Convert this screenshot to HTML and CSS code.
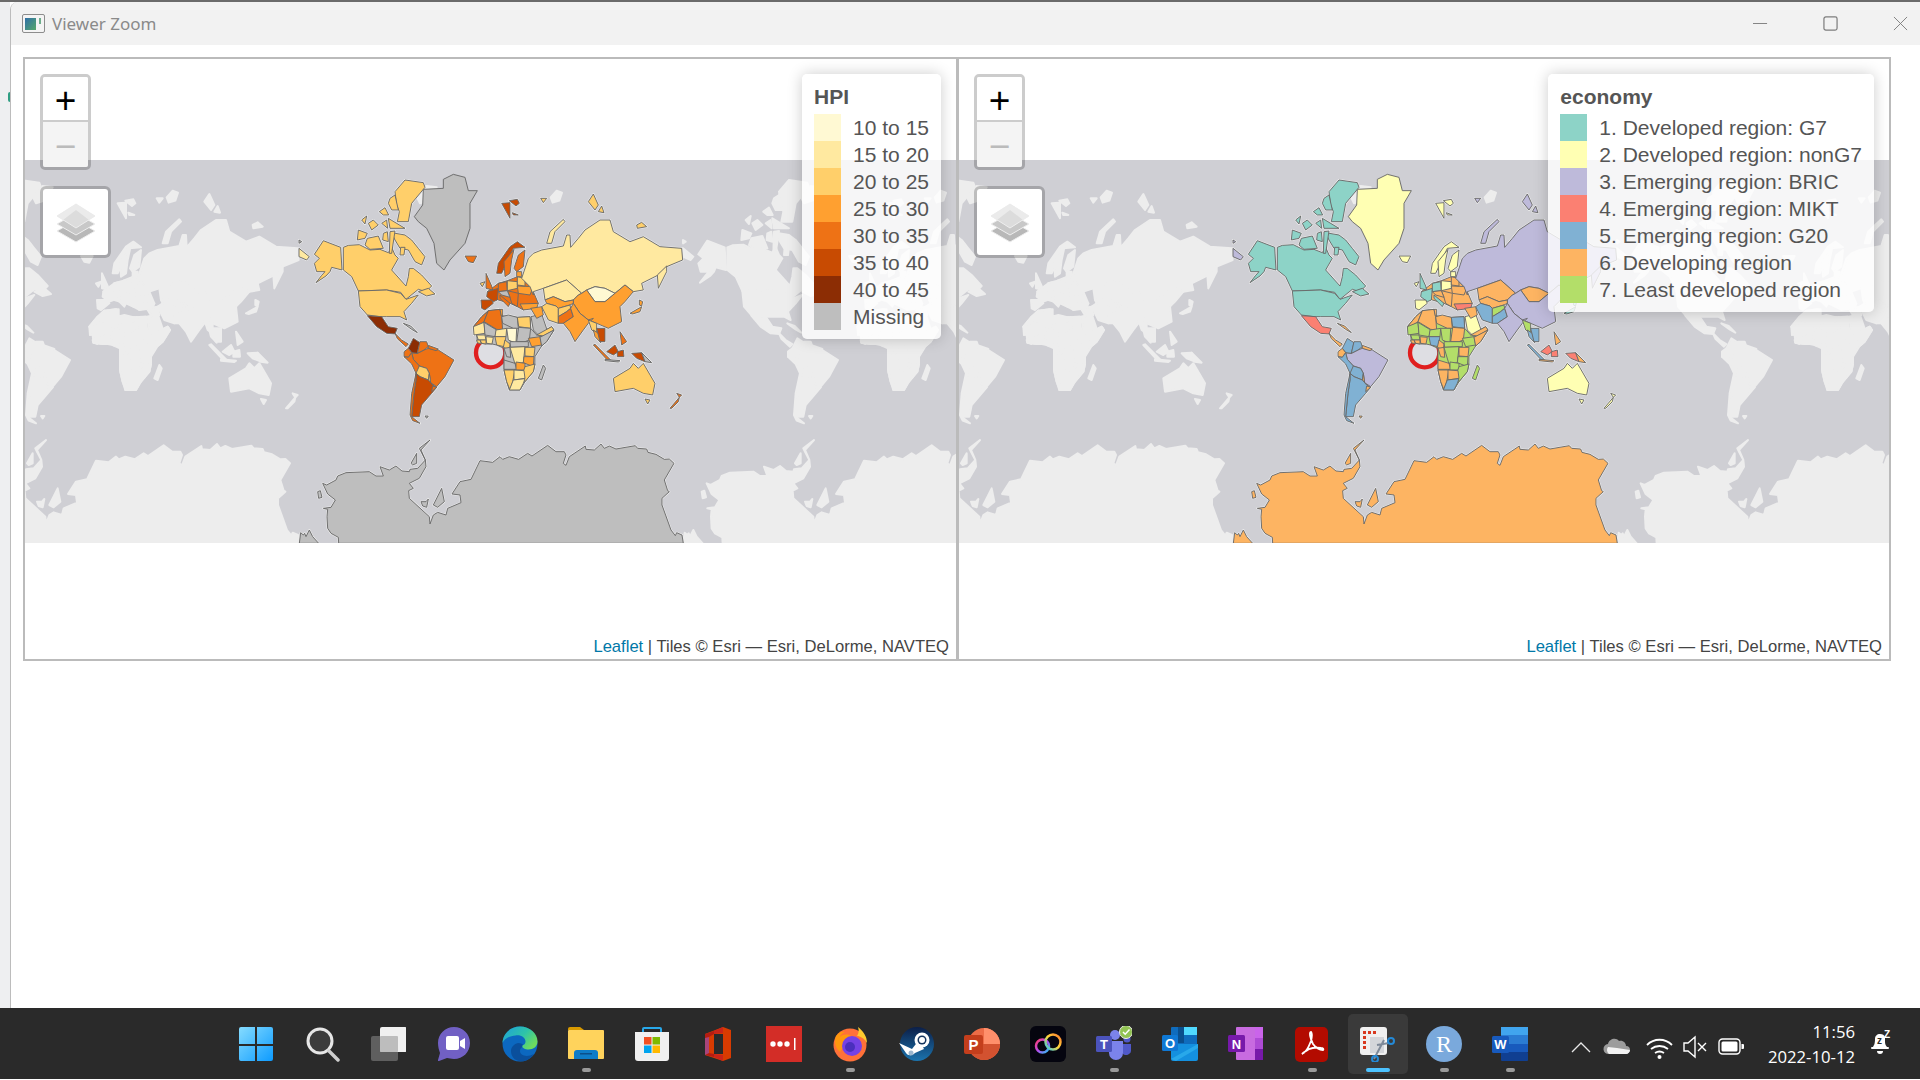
FILE: index.html
```html
<!doctype html>
<html lang="en">

<head>
    <meta charset="utf-8">
    <title>Viewer Zoom</title>

    <link rel="stylesheet" href="styles.css">
</head>

<body>
    <div class="topline"></div>

    <div class="desk">
        <div class="behind"><span class="behind-dot"></span></div>

        <div class="window">
            <div class="titlebar">
                <svg class="title-icon" viewBox="0 0 23 19">
                    <rect x="0.5" y="0.5" width="22" height="18" rx="1.5" fill="#f4f4f4" stroke="#8d8d8d"/>
                    <defs>
                        <linearGradient id="tileg" x1="0" y1="0" x2="1" y2="1">
                            <stop offset="0" stop-color="#2f6fa8"/>
                            <stop offset="1" stop-color="#56a86a"/>
                        </linearGradient>
                    </defs>
                    <rect x="3" y="4" width="11" height="12" fill="url(#tileg)"/>
                    <rect x="17" y="4" width="2" height="6" fill="#6fae8c"/>
                </svg>
                <span class="title-text">Viewer Zoom</span>
                <div class="win-buttons">
                    <svg viewBox="0 0 16 16"><path d="M0 8h15" stroke="#7d7d7d" fill="none"/></svg>
                    <svg viewBox="0 0 16 16"><rect x="1" y="1" width="14" height="14" rx="2" stroke="#7d7d7d" stroke-width="1.3" fill="none"/></svg>
                    <svg viewBox="0 0 16 16"><path d="M1 1l14 14M15 1L1 15" stroke="#7d7d7d" fill="none"/></svg>
                </div>
            </div>

            <div class="content">
                <div class="frame">
                    <div class="pane pane-left">
                        <svg class="map" data-key="h"></svg>

                        <div class="zoom-box">
                            <div class="zoom-btn">+</div>
                            <div class="zoom-btn off">−</div>
                        </div>
                        <div class="layers-box">
                            <svg viewBox="0 0 40 40"><use href="#layers"/></svg>
                        </div>

                        <div class="legend">
                            <div class="legend-title">HPI</div>
                            <div class="row"><i class="h1"></i>10 to 15</div>
                            <div class="row"><i class="h2"></i>15 to 20</div>
                            <div class="row"><i class="h3"></i>20 to 25</div>
                            <div class="row"><i class="h4"></i>25 to 30</div>
                            <div class="row"><i class="h5"></i>30 to 35</div>
                            <div class="row"><i class="h6"></i>35 to 40</div>
                            <div class="row"><i class="h7"></i>40 to 45</div>
                            <div class="row"><i class="h0"></i>Missing</div>
                        </div>

                        <div class="attribution"><a>Leaflet</a> | Tiles © Esri — Esri, DeLorme, NAVTEQ</div>
                    </div>

                    <div class="pane">
                        <svg class="map" data-key="e"></svg>

                        <div class="zoom-box">
                            <div class="zoom-btn">+</div>
                            <div class="zoom-btn off">−</div>
                        </div>
                        <div class="layers-box">
                            <svg viewBox="0 0 40 40"><use href="#layers"/></svg>
                        </div>

                        <div class="legend">
                            <div class="legend-title">economy</div>
                            <div class="row"><i class="e1"></i>1. Developed region: G7</div>
                            <div class="row"><i class="e2"></i>2. Developed region: nonG7</div>
                            <div class="row"><i class="e3"></i>3. Emerging region: BRIC</div>
                            <div class="row"><i class="e4"></i>4. Emerging region: MIKT</div>
                            <div class="row"><i class="e5"></i>5. Emerging region: G20</div>
                            <div class="row"><i class="e6"></i>6. Developing region</div>
                            <div class="row"><i class="e7"></i>7. Least developed region</div>
                        </div>

                        <div class="attribution"><a>Leaflet</a> | Tiles © Esri — Esri, DeLorme, NAVTEQ</div>
                    </div>
                </div>
            </div>
        </div>
    </div>

    <svg class="defs-only">
        <symbol id="layers" viewBox="0 0 40 40">
            <path d="M20 17 39 28 20 39 1 28z" fill="#b8b8b8" stroke="#eee"/>
            <path d="M20 10 39 21 20 32 1 21z" fill="#c8c8c8" stroke="#eee"/>
            <path d="M20 1 39 13 20 25 1 13z" fill="#dcdcdc" stroke="#eee"/>
            <path d="M20 1 39 13 33 17 20 7 7 17 1 13z" fill="#ebebeb"/>
        </symbol>
    </svg>

    <div class="taskbar">
        <div class="task">
            <svg viewBox="0 0 36 36">
                <defs>
                    <linearGradient id="startg" x1="0" y1="0" x2="1" y2="1">
                        <stop offset="0" stop-color="#86dcff"/>
                        <stop offset="1" stop-color="#0d9bff"/>
                    </linearGradient>
                </defs>
                <path d="M1 3a2 2 0 0 1 2-2h14v17H1zM19 1h14a2 2 0 0 1 2 2v15H19zM1 20h16v15H3a2 2 0 0 1-2-2zM19 20h16v13a2 2 0 0 1-2 2H19z" fill="url(#startg)"/>
            </svg>
        </div>
        <div class="task">
            <svg viewBox="0 0 36 36">
                <circle cx="16" cy="15" r="12" fill="#3c3c3c" stroke="#e6e6e6" stroke-width="3"/>
                <path d="M25 25l9 9" stroke="#cfcfcf" stroke-width="3.5" stroke-linecap="round"/>
            </svg>
        </div>
        <div class="task">
            <svg viewBox="0 0 36 36">
                <rect x="1" y="10" width="27" height="25" rx="2" fill="#5f5f5f"/>
                <rect x="10" y="1" width="27" height="25" rx="2" fill="#f0f0f0"/>
                <rect x="10" y="10" width="18" height="16" rx="1" fill="#bdbdbd"/>
            </svg>
        </div>
        <div class="task">
            <svg viewBox="0 0 36 36">
                <path d="M18 1c9 0 16 7 16 16s-7 16-16 16c-3 0-5-1-7-1l-8 3c-1 0-1 0-1-1l2-7C3 24 2 21 2 17 2 8 9 1 18 1z" fill="#7160c4"/>
                <rect x="10" y="10" width="13" height="14" rx="2" fill="#fff"/>
                <path d="M24 15l5-3v11l-5-3z" fill="#fff"/>
            </svg>
        </div>
        <div class="task">
            <svg viewBox="0 0 36 36">
                <defs>
                    <linearGradient id="edgeg" x1="0" y1="0" x2="1" y2="0.6">
                        <stop offset="0" stop-color="#1d9fdc"/>
                        <stop offset="0.6" stop-color="#2ec4a8"/>
                        <stop offset="1" stop-color="#6ddc5f"/>
                    </linearGradient>
                </defs>
                <circle cx="18" cy="18" r="17.5" fill="#0c68c0"/>
                <path d="M32 28c-4 6-10 8-15 7-5-1-8-5-8-10 0-4 3-7 7-8 3 0 5 1 6 3-3 1-4 3-4 5 0 4 6 7 14 3z" fill="#0a4f9c"/>
                <path d="M.5 17C1 7 9 .5 18 .5c10 0 17.500 7 17.500 15 0 5-4 8-9 8-4 0-7-2-6-4 2-1 3-2 3-4 0-4-5-7-10-6C7 10 2 13 .5 17z" fill="url(#edgeg)"/>
            </svg>
        </div>
        <div class="task running">
            <svg viewBox="0 0 36 36">
                <path d="M0 3a2 2 0 0 1 2-2h10l4 3H0z" fill="#d99a00"/>
                <rect x="0" y="4" width="36" height="29" rx="1" fill="#ffd35c"/>
                <path d="M6 33v-6a3 3 0 0 1 3-3h18a3 3 0 0 1 3 3v6z" fill="#0f7cc7"/>
                <rect x="12" y="27" width="12" height="1.500" fill="#0b4f8a"/>
            </svg>
        </div>
        <div class="task">
            <svg viewBox="0 0 36 36">
                <path d="M9 7V3a1 1 0 0 1 1-1h16a1 1 0 0 1 1 1v4" fill="none" stroke="#28a8ea" stroke-width="2"/>
                <path d="M1 6h34v26a3 3 0 0 1-3 3H4a3 3 0 0 1-3-3z" fill="#f0f0f0"/>
                <rect x="10" y="11" width="7.500" height="7.500" fill="#f25022"/>
                <rect x="18.500" y="11" width="7.500" height="7.500" fill="#7fba00"/>
                <rect x="10" y="19.500" width="7.500" height="7.500" fill="#00a4ef"/>
                <rect x="18.500" y="19.500" width="7.500" height="7.500" fill="#ffb900"/>
            </svg>
        </div>
        <div class="task">
            <svg viewBox="0 0 36 36">
                <path d="M5 8 23 1l8 3v28l-8 3-18-6z" fill="#d83b01"/>
                <path d="M5 8l9-3v3L9 11v16l5 1v3l-9-2z" fill="#b51c12"/>
                <path d="M5 12l4-1v16l-4 2z" fill="#a8457a"/>
                <path d="M14 8h9v20h-9z" fill="#2a2a2a"/>
                <path d="M23 1l-9 4v3l9-1zM14 28l9 1v6l-9-4z" fill="#c9241a"/>
            </svg>
        </div>
        <div class="task">
            <svg viewBox="0 0 36 36">
                <rect width="36" height="36" fill="#d32d27"/>
                <circle cx="7" cy="18" r="2.700" fill="#fff"/>
                <circle cx="14" cy="18" r="2.700" fill="#fff"/>
                <circle cx="21" cy="18" r="2.700" fill="#fff"/>
                <rect x="28" y="12" width="1.500" height="12" fill="#fff"/>
            </svg>
        </div>
        <div class="task running">
            <svg viewBox="0 0 36 36">
                <circle cx="18" cy="19" r="16.500" fill="#ff7139"/>
                <path d="M4 10c3-4 6-5 9-4-3 1-5 3-5 5 3-3 8-3 11-1L8 26C3 22 2 15 4 10z" fill="#ff980e"/>
                <path d="M26 1c5 4 9 9 9 16-3-5-7-7-10-7 2-3 2-6 1-9z" fill="#ffcb2e"/>
                <circle cx="20" cy="20" r="10" fill="#7542e5"/>
                <circle cx="18" cy="21" r="5" fill="#4a2fbd"/>
            </svg>
        </div>
        <div class="task">
            <svg viewBox="0 0 36 36">
                <defs>
                    <linearGradient id="steamg" x1="0" y1="0" x2="0" y2="1">
                        <stop offset="0" stop-color="#0c1f48"/>
                        <stop offset="1" stop-color="#1b74ae"/>
                    </linearGradient>
                </defs>
                <circle cx="19" cy="18" r="17" fill="url(#steamg)"/>
                <path d="M1 17l13 6 7-9 5 9-9 4c-3 3-7 3-9 0z" fill="#fff"/>
                <circle cx="24" cy="14" r="7.500" fill="#fff"/>
                <circle cx="24" cy="14" r="4.500" fill="#16365f"/>
                <circle cx="24" cy="14" r="3" fill="#fff"/>
                <circle cx="13" cy="27" r="2.500" fill="#9bb7cf"/>
            </svg>
        </div>
        <div class="task">
            <svg viewBox="0 0 36 36">
                <circle cx="20" cy="18" r="16" fill="#ed6c47"/>
                <path d="M20 2a16 16 0 0 1 16 16H20z" fill="#ff8f6b"/>
                <path d="M4 18h32a16 16 0 0 1-32 0z" fill="#d35230"/>
                <rect x="0" y="9" width="19" height="19" rx="2" fill="#c43e1c"/>
                <text x="9.500" y="24" class="icon-letter">P</text>
            </svg>
        </div>
        <div class="task">
            <svg viewBox="0 0 36 36">
                <defs>
                    <linearGradient id="ccg" x1="0" y1="0" x2="1" y2="1">
                        <stop offset="0" stop-color="#ff3c6e"/>
                        <stop offset="0.5" stop-color="#b44cf0"/>
                        <stop offset="1" stop-color="#25c7f5"/>
                    </linearGradient>
                    <linearGradient id="ccg2" x1="0" y1="1" x2="1" y2="0">
                        <stop offset="0" stop-color="#25c7f5"/>
                        <stop offset="0.5" stop-color="#ffd83a"/>
                        <stop offset="1" stop-color="#ff7a2e"/>
                    </linearGradient>
                </defs>
                <rect width="36" height="36" rx="6" fill="#05050f"/>
                <circle cx="12.500" cy="20" r="6.500" fill="none" stroke="url(#ccg)" stroke-width="2.500"/>
                <circle cx="23" cy="16" r="7.500" fill="none" stroke="url(#ccg2)" stroke-width="2.500"/>
            </svg>
        </div>
        <div class="task running">
            <svg viewBox="0 0 36 36">
                <circle cx="19" cy="9" r="5" fill="#7b83eb"/>
                <circle cx="31" cy="13" r="3.500" fill="#5059c9"/>
                <path d="M12 15h15v12a7 7 0 0 1-14 0z" fill="#7b83eb"/>
                <path d="M27 18h8v7a5 5 0 0 1-8 3z" fill="#5059c9"/>
                <rect x="0" y="10" width="16" height="16" rx="1.500" fill="#4b53bc"/>
                <text x="8" y="23" class="icon-letter small">T</text>
                <circle cx="30" cy="6" r="6.500" fill="#92c353" stroke="#eee" stroke-width="1"/>
                <path d="M27 6l2.200 2.200L33.500 3.500" fill="none" stroke="#fff" stroke-width="1.500"/>
            </svg>
        </div>
        <div class="task">
            <svg viewBox="0 0 36 36">
                <rect x="9" y="1" width="26" height="18" rx="1" fill="#0f6cbd"/>
                <rect x="22" y="1" width="13" height="8" fill="#50d9ff"/>
                <rect x="16" y="1" width="6" height="16" fill="#0a4f8e"/>
                <path d="M9 18h27v15a2 2 0 0 1-2 2H11a2 2 0 0 1-2-2z" fill="#1490df"/>
                <path d="M9 33 36 18v4L14 35z" fill="#28a8ea"/>
                <rect x="0" y="9" width="16" height="16" rx="1.500" fill="#0f78d4"/>
                <text x="8" y="22" class="icon-letter small">O</text>
            </svg>
        </div>
        <div class="task">
            <svg viewBox="0 0 36 36">
                <rect x="8" y="1" width="27" height="33" rx="1" fill="#c86be0"/>
                <rect x="27" y="1" width="8" height="11" fill="#ca64ea"/>
                <rect x="27" y="12" width="8" height="11" fill="#ae4bd5"/>
                <rect x="27" y="23" width="8" height="11" fill="#7719aa"/>
                <rect x="0" y="9" width="17" height="17" rx="1.500" fill="#7719aa"/>
                <text x="8.500" y="22.500" class="icon-letter small">N</text>
            </svg>
        </div>
        <div class="task running">
            <svg viewBox="0 0 36 36">
                <rect x="1" y="1" width="33" height="35" rx="5" fill="#b30b00"/>
                <path d="M8 28c3-1 6-5 9-13 1-4 1-8 0-9-2 0-1 6 2 12 3 4 7 6 10 6 1-1 0-2-2-2-5-1-12 0-15 3-2 1-4 3-4 3z" fill="none" stroke="#fff" stroke-width="1.800"/>
            </svg>
        </div>
        <div class="task active">
            <svg viewBox="0 0 36 36">
                <rect x="0" y="1" width="27" height="28" rx="3" fill="#f0f0f0"/>
                <path d="M3 5h3v3H3zM8 5h3v3H8zM13 5h3v3h-3zM3 10h3v3H3zM3 15h3v3H3zM3 20h3v3H3z" fill="#d8391f"/>
                <rect x="10" y="11" width="14" height="16" fill="#d4d6da"/>
                <path d="M24 14 14 33M17 19l12 -2" stroke="#7f8a99" stroke-width="2" fill="none"/>
                <circle cx="31" cy="15" r="3" fill="none" stroke="#2489d6" stroke-width="2"/>
                <circle cx="15" cy="33" r="3" fill="none" stroke="#2489d6" stroke-width="2"/>
            </svg>
        </div>
        <div class="task running">
            <svg viewBox="0 0 36 36">
                <circle cx="18" cy="18" r="18" fill="#7aa9dc"/>
                <text x="18" y="26" class="icon-r">R</text>
            </svg>
        </div>
        <div class="task running">
            <svg viewBox="0 0 36 36">
                <rect x="9" y="1" width="27" height="8" fill="#41a5ee"/>
                <rect x="9" y="9" width="27" height="9" fill="#2b7cd3"/>
                <rect x="9" y="18" width="27" height="8" fill="#185abd"/>
                <rect x="9" y="26" width="27" height="9" rx="1" fill="#103f91"/>
                <rect x="0" y="10" width="17" height="17" rx="1.500" fill="#185abd"/>
                <text x="8.500" y="23" class="icon-letter small">W</text>
            </svg>
        </div>

        <div class="tray">
            <svg viewBox="0 0 36 36"><path d="M9 23l9-9 9 9" fill="none" stroke="#e8e8e8" stroke-width="1.300"/></svg>
            <svg viewBox="0 0 36 36">
                <path d="M10 25a5 5 0 0 1-1-10c1-5 8-7 11-3 4-1 7 2 7 5 3 0 4 2 4 4s-2 4-4 4z" fill="#9c9c9c"/>
                <path d="M10 25a5 5 0 0 1-1-7l9 1 13 2c0 2-2 4-4 4z" fill="#f2f2f2"/>
            </svg>
            <svg class="tray-wifi" viewBox="0 0 36 36">
                <path d="M6 16c7-7 18-7 25 0M10 20c5-4 12-4 17 0M14 24c3-2 6-2 9 0" fill="none" stroke="#fff" stroke-width="1.800"/>
                <circle cx="18.500" cy="28" r="2" fill="#fff"/>
            </svg>
            <svg viewBox="0 0 36 36">
                <path d="M7 14h4l7-6v20l-7-6H7z" fill="none" stroke="#fff" stroke-width="1.400"/>
                <path d="M21 14l8 8M29 14l-8 8" stroke="#fff" stroke-width="1.400"/>
            </svg>
            <svg viewBox="0 0 36 36">
                <rect x="6" y="10" width="21" height="15" rx="3.500" fill="none" stroke="#fff" stroke-width="1.400"/>
                <rect x="8.500" y="12.500" width="16" height="10" rx="1.500" fill="#fff"/>
                <path d="M28.500 15h1.500a1 1 0 0 1 1 1v3a1 1 0 0 1-1 1h-1.500z" fill="#fff"/>
            </svg>
        </div>

        <div class="clock">
            <div>11:56</div>
            <div>2022-10-12</div>
        </div>
        <svg class="bell" viewBox="0 0 22 24">
            <path d="M3 17c1-2 2-3 2-8 0-3 2-5 5-5s4 1 5 3v5c0 2 1 4 2 5z" fill="#fff"/>
            <rect x="1" y="17" width="18" height="2" rx="1" fill="#fff"/>
            <path d="M7 21h6a3 3 0 0 1-6 0z" fill="#fff"/>
            <text x="9.500" y="14" class="bell-z">z</text>
            <text x="17" y="8" class="bell-zz">Z</text>
        </svg>
    </div>

    <script src="map.js"></script>
</body>

</html>
```

FILE: styles.css
```css
* {
    box-sizing: border-box;
}
html, body {
    margin: 0;
    height: 100%;
    overflow: hidden;
    background: #fff;
    font-family: "Liberation Sans", Arial, sans-serif;
}
.topline {
    height: 2px;
    background: #6b6b6b;
}
.desk {
    display: flex;
    height: 1006px;
}
.behind {
    width: 10px;
    background: #eeeff1;
    padding-top: 90px;
}
.behind-dot {
    display: block;
    width: 2px;
    height: 10px;
    margin-left: 8px;
    background: #2f9e83;
    border-radius: 2px 0 0 2px;
}
.window {
    flex: 1;
    background: #fff;
    border-left: 1px solid #bcbcbc;
    border-top-left-radius: 8px;
    overflow: hidden;
}

/* title bar */
.titlebar {
    display: flex;
    align-items: center;
    height: 43px;
    padding-left: 11px;
    background: #f2f2f2;
}
.title-icon {
    width: 23px;
    height: 19px;
}
.title-text {
    margin-left: 7px;
    font-family: "Noto Sans", sans-serif;
    font-size: 17px;
    color: #8a8a8a;
}
.win-buttons {
    display: flex;
    margin-left: auto;
    margin-right: 12px;
    gap: 55px;
}
.win-buttons svg {
    width: 15px;
    height: 15px;
    display: block;
}

/* map frame */
.content {
    padding: 12px 0 0 12px;
}
.frame {
    display: flex;
    width: 1868px;
    height: 604px;
    border: 2px solid #bbb;
}
.pane {
    position: relative;
    width: 930px;
    padding-top: 101px;
}
.pane-left {
    width: 934px;
    border-right: 3px solid #bbb;
}
.map {
    display: block;
    width: 100%;
    height: 383px;
    background: #cfcfd4;
}
.base {
    fill: #ededed;
    stroke: #ededed;
    stroke-width: 6;
    stroke-linejoin: round;
}
.base-tile {
    filter: blur(.6px);
}
.shape {
    stroke: #686868;
    stroke-width: 2.800;
    stroke-linejoin: round;
}
.spinner {
    fill: #dedee3;
    stroke: #e01f1f;
    stroke-width: 13;
}

/* colour classes, used by legend swatches and map shapes */
.h0 { fill: #bebebe; background: #bebebe; }
.h1 { fill: #fff9d3; background: #fff9d3; }
.h2 { fill: #ffe9a0; background: #ffe9a0; }
.h3 { fill: #ffcf6a; background: #ffcf6a; }
.h4 { fill: #ffa030; background: #ffa030; }
.h5 { fill: #ee7215; background: #ee7215; }
.h6 { fill: #c84b02; background: #c84b02; }
.h7 { fill: #8c2d04; background: #8c2d04; }
.e1 { fill: #8dd3c7; background: #8dd3c7; }
.e2 { fill: #ffffb3; background: #ffffb3; }
.e3 { fill: #bebada; background: #bebada; }
.e4 { fill: #fb8072; background: #fb8072; }
.e5 { fill: #80b1d3; background: #80b1d3; }
.e6 { fill: #fdb462; background: #fdb462; }
.e7 { fill: #b3de69; background: #b3de69; }

/* leaflet controls */
.zoom-box {
    position: absolute;
    left: 15px;
    top: 15px;
    width: 51px;
    height: 96px;
    border: 3px solid rgba(0, 0, 0, .2);
    border-radius: 5px;
    background-clip: padding-box;
    overflow: hidden;
}
.zoom-btn {
    height: 45px;
    background: #fff;
    border-bottom: 2px solid #ccc;
    text-align: center;
    font-size: 37px;
    font-weight: 300;
    line-height: 47px;
    color: #000;
}
.zoom-btn.off {
    height: 45px;
    background: #f4f4f4;
    border-bottom: 0;
    line-height: 49px;
    color: #bbb;
}
.layers-box {
    position: absolute;
    left: 15px;
    top: 127px;
    width: 71px;
    height: 72px;
    padding: 14px 13px;
    background: #fff;
    background-clip: padding-box;
    border: 3px solid rgba(0, 0, 0, .2);
    border-radius: 6px;
}
.layers-box svg {
    display: block;
    width: 40px;
    height: 40px;
}
.defs-only {
    position: absolute;
    width: 0;
    height: 0;
}

/* legend */
.legend {
    position: absolute;
    right: 15px;
    top: 15px;
    padding: 0 12px 9px 12px;
    background: rgba(255, 255, 255, .8);
    border-radius: 5px;
    box-shadow: 0 0 15px rgba(0, 0, 0, .2);
    font-size: 21px;
    color: #555;
}
.legend-title {
    height: 40px;
    padding-top: 11px;
    font-weight: bold;
    line-height: 24px;
}
.row {
    display: flex;
    align-items: center;
    height: 27px;
    white-space: nowrap;
}
.row i {
    width: 27px;
    height: 27px;
    margin-right: 12px;
}
.attribution {
    position: absolute;
    right: 7px;
    bottom: 1px;
    font-size: 16.600px;
    line-height: 22px;
    color: #444;
}
.attribution a {
    color: #0078a8;
}

/* taskbar */
.taskbar {
    display: flex;
    height: 72px;
    padding: 6px 28px 0 223px;
    background: #2a2a2a;
    border-top: 1px solid #3d3d3d;
    margin-top: -1px;
}
.task {
    display: flex;
    flex-direction: column;
    align-items: center;
    width: 60px;
    height: 60px;
    margin: 0 3px;
    padding-top: 12px;
    border-radius: 5px;
}
.task svg {
    flex: none;
    width: 36px;
    height: 36px;
}
.task::after {
    content: "";
    width: 9px;
    height: 4px;
    margin-top: 6px;
    border-radius: 2px;
}
.task.running::after {
    background: #9a9a9a;
}
.task.active {
    background: #3a3a3a;
}
.task.active::after {
    width: 24px;
    background: #4cc2ff;
}
.icon-letter {
    font-family: "Liberation Sans", sans-serif;
    font-weight: bold;
    font-size: 15px;
    fill: #fff;
    text-anchor: middle;
}
.icon-letter.small {
    font-size: 13px;
}
.icon-r {
    font-family: "Liberation Serif", serif;
    font-size: 24px;
    fill: #fff;
    text-anchor: middle;
}
.tray {
    display: flex;
    align-items: center;
    margin-left: 20px;
    height: 66px;
}
.tray svg {
    width: 36px;
    height: 36px;
}
.tray .tray-wifi {
    margin-left: 6px;
}
.clock {
    margin-left: auto;
    height: 66px;
    padding-top: 5px;
    text-align: right;
    font-family: "Open Sans", sans-serif;
    font-size: 16.700px;
    line-height: 25px;
    color: #fff;
}
.bell {
    flex: none;
    width: 22px;
    height: 24px;
    margin: 16px 0 0 15px;
}
.bell-z, .bell-zz {
    font-family: "Liberation Sans", sans-serif;
    font-weight: bold;
    text-anchor: middle;
}
.bell-z {
    font-size: 10px;
    fill: #2a2a2a;
}
.bell-zz {
    font-size: 10px;
    fill: #fff;
}
```

FILE: map.js
```js
// country shapes, in a 1152px wide world (3x the tile). h = HPI class, e = economy class
var land = [
    // africa backing, so the small cells leave no holes
    [0, 7, "580,500 605,470 625,452 660,448 668,468 712,472 750,470 752,505 770,525 815,500 822,510 800,545 785,558 765,590 765,612 760,635 735,665 720,690 688,690 680,665 672,630 672,565 650,555 636,552 618,552 605,550 592,548 590,525"],
    // north america
    [3, 1, "103,283 130,242 182,262 186,330 155,322 150,335 138,348 108,368 125,346 135,335 110,335 103,310 118,295"],
    [2, 3, "57,265 88,290 80,300 57,290"],
    [0, 3, "57,240 65,245 57,250"],
    [3, 1, "190,262 205,256 238,254 270,270 300,268 325,278 335,262 345,285 355,295 335,330 378,378 385,350 388,325 400,325 425,345 455,378 438,395 415,388 378,418 362,397 320,390 235,393 215,350 190,330"],
    [3, 1, "345,95 375,60 430,68 435,82 395,130 385,185 352,185 358,155 350,135"],
    [3, 1, "330,115 345,105 355,150 335,150 325,130"],
    [3, 1, "335,218 375,225 395,240 415,265 435,290 425,315 405,305 385,270 360,265 345,240"],
    [3, 1, "235,210 262,220 255,235 232,240"],
    [3, 1, "262,235 295,228 310,265 270,268 255,255"],
    [3, 1, "245,180 260,168 255,192"],
    [3, 1, "265,190 280,180 295,195 275,210"],
    [3, 1, "305,190 320,180 323,205"],
    [3, 1, "298,155 315,143 326,165 310,165"],
    [3, 1, "325,175 375,205 330,205"],
    [3, 1, "310,220 322,215 325,245 308,240"],
    [3, 1, "330,215 345,213 335,280 328,280"],
    [3, 1, "362,262 375,262 372,285 360,285"],
    [3, 1, "415,395 445,385 465,402 440,408"],
    // greenland has no land in the base map, see below
    [0, 2, "430,88 490,85 490,58 520,43 555,52 565,92 592,92 570,130 570,205 555,250 510,300 492,330 470,310 462,250 440,205 415,185 403,170 428,135", 1],
    [3, 1, "235,393 320,390 362,400 378,418 415,405 395,430 372,455 380,480 360,470 320,470 300,470 262,465 240,440"],
    [7, 4, "262,467 305,470 325,500 352,505 345,522 320,520 290,500"],
    [5, 6, "345,520 365,540 385,552 378,560 352,536"],
    [0, 6, "370,490 392,498 412,518 395,508"],
    // south america
    [5, 3, "412,580 432,570 445,565 475,570 522,600 495,650 470,680 452,668 448,640 440,625 418,618 400,598 395,578"],
    [7, 5, "385,565 400,535 420,548 412,580 395,578"],
    [5, 5, "420,545 440,545 445,560 432,570 412,580"],
    [5, 6, "445,556 475,567 468,572 445,565"],
    [5, 6, "372,575 385,565 395,578 385,592 372,590"],
    [5, 5, "372,590 385,592 395,578 400,598 418,618 420,632 408,640 395,612"],
    [3, 5, "418,618 440,625 448,640 445,660 420,650 408,640"],
    [3, 6, "445,660 448,640 452,668 458,675"],
    [6, 5, "420,650 445,660 458,675 470,682 455,700 425,735 418,770 395,770 402,700 408,660 408,640"],
    [5, 5, "408,640 408,660 402,700 395,770 420,790 398,782 390,765 395,700"],
    [5, 6, "458,678 470,682 455,695"],
    [0, 6, "435,768 445,768 440,775"],
    // europe
    [5, 6, "622,395 655,370 682,362 712,350 725,355 750,380 760,395 775,430 730,450 712,440 690,430 655,420"],
    [6, 2, "650,340 655,310 690,260 712,245 735,262 700,265 665,340"],
    [5, 2, "675,350 672,305 702,268 695,300 690,340"],
    [5, 2, "702,325 715,285 735,270 730,320 710,335"],
    [5, 2, "555,288 590,288 580,308 565,305"],
    [6, 2, "665,130 690,128 690,175"],
    [6, 2, "688,122 712,118 718,130 708,138"],
    [6, 2, "697,158 715,165 700,165"],
    [5, 1, "618,385 618,340 635,378 638,390"],
    [3, 2, "600,370 615,365 607,380"],
    [6, 1, "622,395 655,385 652,420 640,425 620,410"],
    [6, 2, "603,420 635,420 640,430 615,450 605,445"],
    [5, 1, "655,370 680,365 682,392 655,395"],
    [3, 2, "682,362 712,365 712,385 682,392"],
    [5, 1, "660,405 690,430 685,440 660,415"],
    [4, 6, "712,378 760,380 750,405 715,400"],
    [3, 6, "712,350 735,355 735,378 712,375"],
    [4, 2, "710,335 725,335 725,350 710,350"],
    [5, 6, "682,392 715,400 712,440 695,430 690,412"],
    [4, 4, "720,432 775,430 770,445 730,450"],
    [0, 6, "655,395 682,392 690,412 665,405"],
    // russia and asia
    [2, 3, "725,355 745,295 760,280 785,270 850,258 860,225 870,225 872,262 895,235 915,210 960,180 990,180 1000,215 1050,245 1090,230 1140,260 1205,265 1208,300 1160,320 1135,345 1085,370 1090,390 1060,395 1035,375 1005,400 975,385 945,380 920,390 905,400 860,360 790,385 760,395 760,405 750,380"],
    [2, 6, "790,385 860,360 905,400 895,405 880,420 855,425 820,410 795,420"],
    [2, 3, "1132,345 1160,318 1160,335 1135,385"],
    [2, 3, "800,250 810,215 850,178 855,185 825,215 815,250"],
    [3, 3, "925,125 940,102 955,135 945,150"],
    [3, 3, "955,155 965,138 972,158"],
    [3, 3, "782,115 800,115 790,128"],
    [3, 3, "1070,195 1085,187 1100,200 1072,205"],
    [1, 6, "920,390 945,380 975,385 1005,400 975,425 945,425"],
    [4, 3, "905,400 920,390 945,425 975,425 1005,400 1035,375 1060,395 1035,425 1020,440 1025,485 985,505 950,490 925,480 900,460 880,430 880,420 895,405"],
    [4, 6, "795,420 820,410 855,425 880,420 880,430 870,435 835,445 828,438 800,430"],
    [3, 5, "785,440 800,430 828,438 835,445 835,490 805,480"],
    [0, 2, "753,470 785,462 803,515 780,530 760,510"],
    [4, 6, "752,445 785,440 790,465 770,475"],
    [3, 7, "835,445 870,435 872,445 860,455 835,470"],
    [5, 5, "835,470 860,455 872,445 880,470 850,490 835,490"],
    [4, 3, "850,490 880,470 872,445 880,430 900,460 925,480 940,475 925,490 910,510 885,545 870,515"],
    [3, 7, "925,480 950,490 950,520 935,510"],
    [4, 5, "940,510 955,520 962,548 945,530"],
    [6, 5, "950,505 975,505 975,545 960,545"],
    [5, 5, "940,555 945,553 992,600 980,598"],
    [6, 4, "980,575 1005,555 1015,575 1000,585"],
    [6, 4, "1012,575 1030,570 1032,590 1012,590"],
    [5, 6, "1020,515 1040,545 1025,555"],
    [6, 4, "1055,580 1085,578 1095,605 1070,595"],
    [0, 6, "1085,578 1115,608 1095,605"],
    [4, 1, "1050,460 1085,440 1080,455 1058,462"],
    [4, 1, "1078,420 1088,425 1085,438 1078,435"],
    [0, 6, "975,598 1020,602 1015,606 975,602"],
    // oceania
    [3, 2, "1000,655 1050,625 1060,610 1075,625 1090,610 1125,670 1118,705 1090,700 1060,685 1005,695"],
    [3, 2, "1095,717 1110,720 1103,732"],
    [5, 2, "1170,745 1198,712 1195,725 1175,745"],
    [5, 2, "1190,700 1205,705 1198,712"],
    // africa
    [5, 6, "582,498 605,470 625,452 612,485 590,500"],
    [5, 6, "625,452 660,448 665,470 668,510 650,508 612,485"],
    [4, 6, "660,448 668,448 668,468 664,468"],
    [0, 6, "665,470 685,465 712,472 715,505 700,505 668,490"],
    [3, 5, "712,472 750,470 752,505 716,500"],
    [0, 6, "716,502 752,505 748,540 735,545 710,545"],
    [2, 7, "580,500 612,487 615,520 582,525"],
    [0, 7, "612,487 650,510 645,530 615,525"],
    [2, 7, "648,510 680,505 678,530 645,530"],
    [1, 7, "680,505 710,505 708,550 685,540"],
    [3, 6, "770,525 815,500 822,510 790,528"],
    [4, 7, "745,535 780,530 785,555 755,560"],
    [0, 6, "780,532 822,510 800,545 785,558"],
    [2, 7, "590,525 615,525 618,540 595,540"],
    [3, 6, "600,540 618,540 618,552 605,550"],
    [2, 6, "618,530 640,532 636,552 620,550"],
    [3, 5, "645,530 678,530 672,560 650,555"],
    [3, 6, "675,540 690,552 688,570 670,562"],
    [0, 7, "690,545 745,545 745,560 692,562"],
    [0, 6, "672,565 690,562 692,592 680,590"],
    [2, 7, "690,562 735,560 730,608 705,612"],
    [3, 6, "735,562 765,562 762,590 735,588"],
    [4, 7, "732,590 762,590 760,620 730,608"],
    [0, 6, "672,600 705,610 710,628 672,628"],
    [4, 7, "708,606 735,610 735,630 708,630"],
    [3, 7, "735,620 765,612 760,635 735,665 728,640"],
    [3, 6, "672,630 705,630 698,665 690,690 680,665"],
    [2, 6, "702,630 732,632 735,655 702,660"],
    [2, 5, "688,690 700,660 735,656 730,670 720,690"],
    [0, 7, "775,655 790,615 797,625 785,660"],
    [3, 6, "590,540 600,540 604,552 592,548"]
];

// antarctica, drawn on its own because it reaches the bottom of the tile
var ice = [
    [0, 6, "10,370 14,338 22,345 26,340 30,350 40,330 50,350 68,370"],
    [0, 6, "128,370 127,352 105,340 95,325 93,290 95,268 82,265 105,262 118,240 95,222 80,190 92,195 120,180 125,168 150,158 220,155 240,168 262,168 252,140 280,150 300,138 318,153 340,155 342,148 365,145 388,120 375,95 370,85 402,60 375,90 388,120 390,140 370,175 340,190 352,205 338,212 340,235 400,290 402,312 412,285 425,277 450,285 455,265 495,248 492,225 468,222 492,185 525,178 552,122 590,127 612,110 620,118 640,110 668,118 695,100 708,108 755,76 780,95 805,95 810,105 802,130 810,136 820,110 868,78 870,88 895,90 915,72 925,85 940,78 960,87 1018,77 1025,85 1052,87 1056,97 1080,103 1105,118 1120,117 1134,130 1105,180 1115,212 1120,215 1098,235 1098,255 1125,330 1138,347 1142,338 1158,345 1162,370"],
    [0, 6, "65,215 73,212 78,232 68,235"],
    [0, 6, "345,130 362,100 362,130 350,135"],
    [0, 6, "375,245 390,245 397,237 392,262 380,258"],
    [0, 6, "412,255 437,205 445,245 425,262"]
];
ice.forEach(function (s) {
    s[2] = s[2].split(" ").map(function (p) {
        var xy = p.split(",");
        return (+xy[0] + 48) + "," + (+xy[1] + 780);
    }).join(" ");
});
var shapes = land.concat(ice);

// bits of the base map with no country on them
var extraBase = [
    "812,112 830,92 846,98 838,122 818,128",
    "410,110 440,78 470,82 450,120 420,130"
];

function tile(x, inner, cls) {
    return '<g class="' + (cls || "") + '" transform="translate(' + x + ',0) scale(0.33333) translate(-57,0)">' + inner + '</g>';
}

function drawMap(svg) {
    var key = svg.getAttribute("data-key");
    var base = "";
    var top = "";

    shapes.forEach(function (s) {
        if (!s[3]) {
            base += '<polygon class="base" points="' + s[2] + '"/>';
        }
        top += '<polygon class="shape ' + key + (key == "h" ? s[0] : s[1]) + '" points="' + s[2] + '"/>';
    });
    extraBase.forEach(function (p) {
        base += '<polygon class="base" points="' + p + '"/>';
    });

    var html = tile(-110, base, "base-tile") + tile(274, base, "base-tile") + tile(658, base, "base-tile");
    html += tile(274, '<circle class="spinner" cx="632" cy="578" r="44"/>' + top);
    svg.innerHTML = html;
}

var maps = document.querySelectorAll(".map");
for (var i = 0; i < maps.length; i++) {
    drawMap(maps[i]);
}
```
